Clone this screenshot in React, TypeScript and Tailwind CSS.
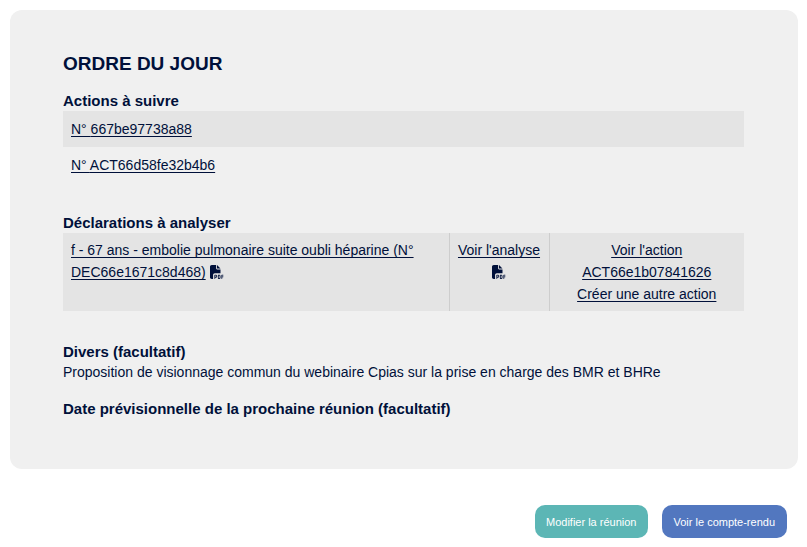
import { FaFilePdf } from "react-icons/fa6";

const actions = ["667be97738a88", "ACT66d58fe32b4b6"];

const titleClass = "text-[15px] leading-[21px] font-bold";
const linkClass = "underline underline-offset-2 [text-decoration-skip-ink:none]";
const cellClass = "px-2 py-[6px] leading-[22px]";

const PdfLink: React.FC = () => (
	<a href="#" aria-label="PDF">
		<FaFilePdf className="mb-[3px] inline" />
	</a>
);

const App: React.FC = () => {
	return (
		<div className="pt-[10px] pr-[9px] pb-2 pl-[10px] font-['Liberation_Sans',Arial,sans-serif] text-[14px] leading-[21px] text-[#00103a]">
			<main className="rounded-xl bg-[#f0f0f0] pt-[40px] pr-[54px] pb-[50px] pl-[53px]">
				<h1 className="mb-[13px] text-[19px] leading-[27px] font-bold">ORDRE DU JOUR</h1>

				<section className="mb-[29px]">
					<h2 className={titleClass}>Actions à suivre</h2>
					<ul>
						{actions.map((a) => (
							<li key={a} className="p-2 leading-[20px] odd:bg-[#e4e4e4]">
								<a href="#" className={linkClass}>N° {a}</a>
							</li>
						))}
					</ul>
				</section>

				<section className="mb-[30px]">
					<h2 className={titleClass}>Déclarations à analyser</h2>
					<table className="w-full bg-[#e4e4e4]">
						<tbody>
							<tr className="align-top">
								<td className={cellClass}>
									<a href="#" className={linkClass}>f - 67 ans - embolie pulmonaire suite oubli héparine (N° DEC66e1671c8d468)</a>{" "}
									<PdfLink />
								</td>
								<td className={`${cellClass} w-[100px] border-l border-[#cdcdcd] text-center`}>
									<a href="#" className={linkClass}>Voir l'analyse</a>
									<br />
									<PdfLink />
								</td>
								<td className={`${cellClass} w-[195px] border-l border-[#cdcdcd] text-center`}>
									<a href="#" className={linkClass}>Voir l'action ACT66e1b07841626</a>
									<br />
									<a href="#" className={linkClass}>Créer une autre action</a>
								</td>
							</tr>
						</tbody>
					</table>
				</section>

				<section className="mb-[15px]">
					<h2 className={titleClass}>Divers (facultatif)</h2>
					<p>Proposition de visionnage commun du webinaire Cpias sur la prise en charge des BMR et BHRe</p>
				</section>

				<h2 className={titleClass}>Date prévisionnelle de la prochaine réunion (facultatif)</h2>
			</main>

			<div className="mt-[36px] mr-[11px] flex justify-end gap-[14px] text-[11px] leading-[17px] text-white">
				<button type="button" className="rounded-[10px] bg-[#5cb6b5] px-[11px] pt-[9px] pb-[7px]">Modifier la réunion</button>
				<button type="button" className="rounded-[10px] bg-[#5277bf] px-3 pt-[9px] pb-[7px]">Voir le compte-rendu</button>
			</div>
		</div>
	);
};

export default App;
